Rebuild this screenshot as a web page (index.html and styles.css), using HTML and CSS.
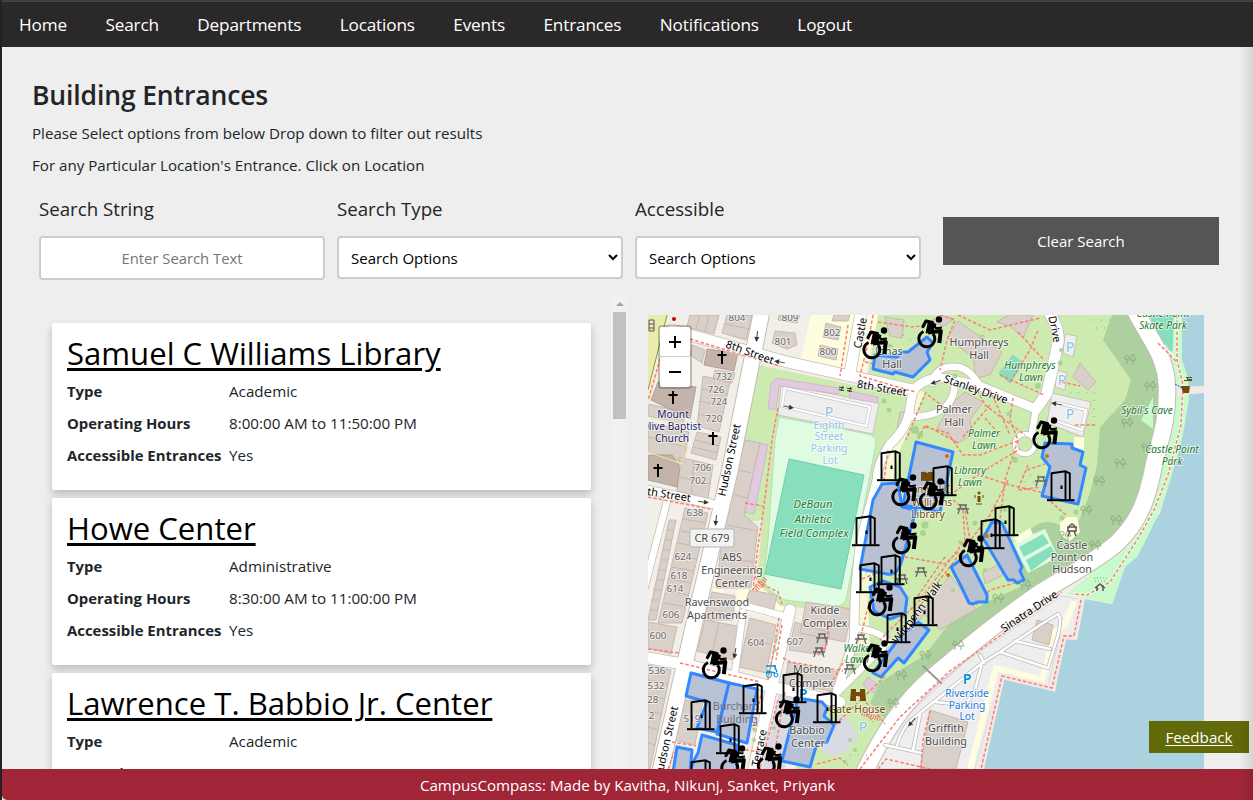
FILE: index.html
```html
<!DOCTYPE html>
<html lang="en">
<head>
<meta charset="utf-8">
<title>Building Entrances</title>
<link rel="stylesheet" href="styles.css">
</head>
<body>
<div class="window">
<nav class="nav"><a>Home</a><a>Search</a><a>Departments</a><a>Locations</a><a>Events</a><a>Entrances</a><a>Notifications</a><a>Logout</a></nav>
<main class="page">
<h1 class="title">Building Entrances</h1>
<p class="intro">Please Select options from below Drop down to filter out results</p>
<p class="intro second">For any Particular Location's Entrance. Click on Location</p>
<form class="filters">
<label class="field"><span>Search String</span><input type="text" placeholder="Enter Search Text"></label>
<label class="field"><span>Search Type</span><select><option>Search Options</option></select></label>
<label class="field"><span>Accessible</span><select><option>Search Options</option></select></label>
<button type="button" class="clear">Clear Search</button>
</form>
<div class="content">
<section class="list">
<article class="card"><h2><a>Samuel C Williams Library</a></h2><dl><dt>Type</dt><dd>Academic</dd><dt>Operating Hours</dt><dd>8:00:00 AM to 11:50:00 PM</dd><dt>Accessible Entrances</dt><dd>Yes</dd></dl></article>
<article class="card"><h2><a>Howe Center</a></h2><dl><dt>Type</dt><dd>Administrative</dd><dt>Operating Hours</dt><dd>8:30:00 AM to 11:00:00 PM</dd><dt>Accessible Entrances</dt><dd>Yes</dd></dl></article>
<article class="card"><h2><a>Lawrence T. Babbio Jr. Center</a></h2><dl><dt>Type</dt><dd>Academic</dd><dt>Operating Hours</dt><dd></dd></dl></article>
</section>
<div class="scroll"><i class="up"></i><i class="thumb"></i></div>
<section class="map">
<svg class="tiles" viewBox="648 315 556 454" width="556" height="454">
<defs>
<g id="door" fill="none" stroke="#000" stroke-linejoin="round"><path d="M0 30.200H27.500" stroke-width="2"/><path d="M4.500 29.500V3.200L18.500 1.200V29.500M18.500 1.300L22.800 3.300V29.500" stroke-width="1.900"/><path d="M14.500 15.500v3.500" stroke-width="2"/></g>
<g id="chair" fill="none" stroke="#000" stroke-linejoin="round"><circle cx="21" cy="3.500" r="3.200" fill="#000" stroke="none"/><path d="M5 10.500L8 5L14.500 6.500" stroke-width="3.200" stroke-linecap="round"/><path d="M10.500 5.500L18 8.500L14 16L8 17Z" fill="#000" stroke-width="1"/><path d="M10 16.500L22.800 15L21.300 27" stroke-width="4"/><path d="M16 9L18 12.300L24 11.500" stroke-width="2.200"/><path d="M5.500 15.500A8 8 0 1 0 16.800 23Q16.800 20 15 18" stroke-width="3"/></g>
<g id="cross"><path d="M0-6V7M-4.500-2H4.500" stroke="#000" stroke-width="2" fill="none"/></g>
<g id="trees" fill="none" stroke="#86aa7a" stroke-width=".9"><path d="M-3 5V0M-3-4Q-6-3-5 0H-1Q0-3-3-4M3 5V1M3-5L0 1H6Z"/></g>
<g id="picnic" fill="none" stroke="#666" stroke-width="1.300"><path d="M-4-4H4M-6 0H6M-2-4L-5 5M2-4L5 5"/></g>
<g id="arrow"><path d="M-5 0H3" stroke="#444" fill="none"/><path d="M6 0L1-2.500V2.500Z" fill="#333"/></g>
</defs>
<rect x="648" y="315" width="556" height="454" fill="#f2efe9"/>
<!-- land cover -->
<path fill="#fffde0" d="M811 315H880L862 376L800 363ZM743 440L720 545L712 600L722 600L760 440ZM738 580L790 592L785 620L735 610Z"/>
<path fill="#cdebb0" d="M759 365L873 389L866 384L878 315H1140L1167 380L1150 480L1110 550L950 665L860 769H795L850 640L850 612L780 606L757 580L762 520L741 523L744 440Z"/>
<path fill="#fffde0" d="M876 315H863L853 378L915 395L904 430L880 452L855 580L851 650L870 650L868 600L900 450L925 392L865 380Z" opacity=".75"/>
<path fill="#add19e" d="M1112 315H1140L1170 360V430L1148 500L1110 555L1040 600L947 672L890 725L870 703L880 682L925 655L948 625L985 603L1024 585L1006 550L1030 530Q1040 519 1055 523L1075 530L1090 493L1097 465L1100 427L1125 400L1131 380L1103 340Z"/>
<path fill="#aad3df" d="M1182 315H1204V769H983L1004 680L1012 674L1055 692L1065 638L1077 640L1085 599L1112 604L1125 567L1160 513L1173 470L1189 400L1182 360Z"/>
<path fill="#c8facc" d="M1140 315H1182V360Q1190 380 1189 395Q1184 440 1173 470Q1163 510 1137 557L1125 567L1112 604L1067 594L1130 540L1158 480L1174 390Z"/>
<path fill="#eee" stroke="#d8d8d8" d="M863 769L900 722L965 662L1062 596L1083 600L1074 636L1060 636L1048 686L1008 674L998 685L975 769Z"/>
<path fill="none" stroke="#fffde0" stroke-width="6" d="M1074 601L1065 625L1055 632L1042 680L996 668L970 769"/>
<path fill="none" stroke="#f2e9e6" stroke-width="6" d="M1081 598L1074 637L1064 636L1052 688L1002 676L981 769"/>
<path fill="#f2e9e0" d="M1172 387L1204 386V393L1172 396Z"/>
<path fill="#88dfc0" stroke="#70c9a7" stroke-width=".6" d="M1150 315H1173L1172 351L1165 350ZM1013 355L1023 363L1010 383L999 373Z"/>
<path fill="#dffce2" stroke="#aadbb4" stroke-width=".8" d="M779 417L868 434Q876 436 876 443L846 600Q843 606 836 606L785 600Q764 590 764 578L768 540L775 440Z"/>
<path fill="#88dfbe" stroke="#75ccab" d="M789 459L864 475L841 589L765 574Z"/>
<path fill="#eee" stroke="#bfb6b6" stroke-width=".8" d="M781 384L879 403L873 434L778 415ZM1065 334L1077 336L1073 357L1063 353ZM1057 370L1067 373L1065 390L1055 387ZM1052 393L1091 402L1083 437L1047 423Z"/>
<path fill="none" stroke="#c5c5c5" stroke-width="3.500" d="M785 386L782 406L866 426L870 407L785 388M1058 403L1086 410L1082 430L1056 421"/>
<path fill="none" stroke="#fff" stroke-width="2.300" d="M785 386L782 406L866 426L870 407L785 388M1058 403L1086 410L1082 430L1056 421"/>
<path fill="#e0cadd" stroke="#c9aec5" stroke-width=".7" d="M776 378L839 388V394L779 386L776 409H768L771 384ZM850 391L878 397L877 403L849 398ZM759 443L768 445L754 514L743 512ZM868 677L878 685L873 693L863 685Z"/>
<path fill="#dffce2" d="M1013 543L1045 529L1058 557L1028 573Z"/><path fill="#88dfbe" d="M1019 547L1043 534L1049 543L1024 557ZM1026 560L1051 546L1055 553L1031 571Z"/><path fill="#fffde0" d="M1013 538L1030 528L1033 534L1018 543ZM1060 523L1067 517H1077L1080 532L1070 541L1060 535ZM1074 437H1084V451H1074Z"/><path fill="#c8facc" d="M1153 397V429L1141 420Z"/>
<path fill="#dadae5" d="M780 690L800 696L785 769H762ZM845 715L858 735Q850 752 832 757L820 749L835 718Z"/>
<!-- buildings -->
<g fill="#d9d0c9" stroke="#c1b0a6" stroke-width=".8">
<path d="M690 315H719L714 334L687 327ZM700 315L696 329M709 315L705 332M727 315H752L746 340L722 333ZM725 324L750 329M692 345L705 350L702 363L690 355ZM715 370L735 373L732 383L713 379ZM703 376L730 382L719 432L697 426ZM701 389L727 394M699 401L724 406M698 414L722 419M697 432L721 437L716 460L691 453ZM695 440L719 446M693 447L718 453"/>
<path d="M648 404L686 412L683 424L648 416ZM648 422L689 432L684 462L648 452ZM648 437L687 447M679 457L713 465L708 499L677 491ZM677 476L710 484M694 461L691 495"/>
<path d="M685 508L708 513L682 623H658ZM683 519L706 523M681 531L703 535M678 543L700 547M675 555L697 559M672 567L694 571M669 579L691 583M667 591L689 595M664 603L686 607M669 520H676L656 620H648ZM667 530H674M665 540H672M662 550H670M660 560H668M658 570H666M656 580H664M653 590H661M651 600H659M650 610H657"/>
<path d="M745 440L760 443L744 515L758 527L751 588L716 588L723 530ZM739 470L751 473M734 495L747 498M727 525L758 531M720 558L754 562M750 590L777 595L773 613L743 606ZM712 592L735 596L733 620L704 620ZM705 620L742 627L733 660L697 651ZM719 622L712 655M750 618L776 625L766 673L739 667ZM747 638L772 645M648 622L677 627L671 654L648 648ZM648 665L671 670L650 769H648ZM648 680L668 684M648 695L665 699M648 711L662 714M648 727L658 730M648 743L655 745"/>
<path d="M806 602L852 609L845 642L800 633ZM795 622L830 633L823 655L789 650ZM788 662L842 673L836 692L785 683ZM685 700L703 700L695 745L674 740ZM775 331L795 333L797 345L787 349L772 343ZM779 315H800L797 323L778 320ZM826 323L841 327L838 340L823 337ZM820 345L838 349L836 360L818 356ZM834 315H850L848 321H832Z"/>
<path d="M885 317L904 320L902 338L890 336ZM958 321L1002 352L990 375L976 378L973 357L947 338ZM997 322L1008 315H1033L1023 338L1010 326ZM965 392L983 402L970 420L972 435L958 443L937 428L950 405ZM1080 363L1096 382L1088 390L1073 377ZM950 575L976 609L940 630L922 612ZM983 572L1000 564L1003 575L985 584ZM930 710L968 722L956 769H920ZM1037 620L1053 625L1049 645L1032 640ZM900 412H906V429H897ZM919 604L926 610L920 620L914 615ZM940 315L954 319L944 326L930 322Z"/>
</g>
<path fill="#c4b3aa" stroke="#aa978b" stroke-width=".8" d="M707 349L738 353L734 371L704 365ZM658 382L696 387L690 419L651 400ZM648 455H672L680 467L677 487L648 480Z"/>
<path fill="none" stroke="#eeea9e" d="M649 418L690 424M650 433L688 447L682 464L648 452M668 330L648 405"/>
<path fill="#e6eba0" d="M648 315H668L656 360L648 392Z" opacity=".8"/><path fill="none" stroke="#8c9c3a" d="M667 315L648 390"/>
<!-- roads: casing then fill -->
<g fill="none" stroke-linecap="round" stroke-linejoin="round">
<g stroke="#c5bbb7">
<path stroke-width="18.500" d="M1135 310C1150 340 1166 355 1167 387C1168 420 1160 440 1154 465C1147 500 1140 520 1117 543C1095 562 1060 580 1040 593C1000 620 970 645 947 665C915 690 890 718 863 775"/>
<path stroke-width="17.500" d="M762 310L730 470L695 620L660 772"/>
<path stroke-width="12.500" d="M672 330L783 361L913 390M861 312L850 373M1049 312Q1060 330 1058 343L1047 393L1036 409M648 658L688 665L777 688L840 702M790 610L773 682L753 772"/>
<path stroke-width="10" d="M648 490L712 504M913 390Q930 372 958 381L980 386L1036 409M913 390L910 407Q908 428 890 444Q877 465 877 480L860 543L855 593L854 640L837 692"/>
<path stroke-width="8" d="M933 383Q935 365 958 367Q970 369 980 386M955 383Q954 417 910 417M1036 409L1032 432M668 497L644 590M743 612L735 672M743 605L783 616M854 628Q880 630 888 642L830 700"/>
<circle cx="1025" cy="444" r="10" stroke-width="6"/></g>
<g stroke="#fff">
<path stroke-width="16.500" d="M1135 310C1150 340 1166 355 1167 387C1168 420 1160 440 1154 465C1147 500 1140 520 1117 543C1095 562 1060 580 1040 593C1000 620 970 645 947 665C915 690 890 718 863 775"/>
<path stroke-width="15.500" d="M762 310L730 470L695 620L660 772"/>
<path stroke-width="11" d="M672 330L783 361L913 390M861 312L850 373M1049 312Q1060 330 1058 343L1047 393L1036 409M648 658L688 665L777 688L840 702M790 610L773 682L753 772"/>
<path stroke-width="8.500" d="M648 490L712 504M913 390Q930 372 958 381L980 386L1036 409M913 390L910 407Q908 428 890 444Q877 465 877 480L860 543L855 593L854 640L837 692"/>
<path stroke-width="6.500" d="M933 383Q935 365 958 367Q970 369 980 386M955 383Q954 417 910 417M1036 409L1032 432M668 497L644 590M743 612L735 672M743 605L783 616M854 628Q880 630 888 642L830 700"/>
<circle cx="1025" cy="444" r="10" stroke-width="4.500"/></g>
<path stroke="#bbb" stroke-width="4" d="M885 745L921 753M897 745Q903 725 915 717L982 663L1000 652L1040 625L1058 614Q1062 618 1058 635L1048 668L1000 652M982 663L975 690L965 705L935 702M980 655L984 663M920 715L913 750M1015 641L1050 649"/>
<path stroke="#fff" stroke-width="2.500" d="M885 745L921 753M897 745Q903 725 915 717L982 663L1000 652L1040 625L1058 614Q1062 618 1058 635L1048 668L1000 652M982 663L975 690L965 705L935 702M980 655L984 663M920 715L913 750M1015 641L1050 649"/>
<path stroke="#999" stroke-width="2" d="M923 666L941 683"/>
</g>
<!-- footpaths -->
<g fill="none" stroke="#fff" stroke-opacity=".6" stroke-width="2.800"><path d="M1177 315L1177 360L1183 385L1181 425L1168 475L1154 510L1137 540L1110 582L1087 595L1073 594M1164 345L1177 362"/></g>
<g fill="none" stroke="#f98072" stroke-width="1.500" stroke-dasharray="3.500 2">
<path d="M1158 343L1177 362M1177 315V360L1183 385L1181 425L1168 475L1154 510L1137 540L1110 582L1087 595L1073 594M1081 600L1074 636L1064 636L1052 688L1002 676L981 769"/>
<path d="M690 339L780 366M668 332L654 380L648 400M778 408L772 440L766 490L762 520L758 545L753 590L758 582L778 592L782 604M745 503L763 506M648 497L710 509M648 649L680 653M755 576L765 590"/>
<path d="M873 315L868 343L860 376L915 392M878 322L912 327L938 324M865 362L878 365M848 325L840 376M940 315L955 320L947 340L940 370M958 315L990 330L1040 318M1018 332L1044 360M1000 375L1044 395M1010 382L1030 350L1038 330M1013 398L1010 420L1018 440L1005 480L1000 520M990 390L1010 435M958 443L925 425L918 440M925 427L948 433L963 455L980 455L1020 440M950 495L985 470L1020 449M985 477L1010 485L1040 492L1066 515M963 510L965 540L920 600L880 640M953 500L965 510L970 540M1008 480L990 515L955 560L915 612M975 385L985 405L1025 435M990 405L963 437M985 418L1000 435M905 557L945 564L960 550M945 557L915 600M1028 465L1018 490L1040 487M1027 470L1045 464M888 450L880 510L866 575M872 590L860 640M862 579L895 565M928 395L945 408M926 392L906 440M1062 382L1080 386M1075 425H1096M1012 543L1005 528M976 605L990 590L1018 582"/>
<path d="M779 618L772 660L768 680M782 625L776 660M783 658L790 662L843 671M785 692L772 769M778 700L760 769M680 663L760 682M860 769L900 717L950 671L1062 592M885 676L835 725M672 742L696 746M668 769L674 752M740 749L760 752M762 690L753 730M863 708L873 722M858 695L875 711L885 724M817 764L840 758L848 765M878 769L886 759L930 769M930 711L923 740L921 769M830 620L825 650M818 655L828 643M833 680L845 660"/>
</g>
<path fill="none" stroke="#ef6f62" stroke-width="5" stroke-dasharray="1 1.300" d="M862 713L880 719M756 590L766 578"/>
<g fill="#a3d18b" opacity=".85"><circle cx="890" cy="346" r="2"/><circle cx="884" cy="401" r="2.500"/><circle cx="889" cy="410" r="2.500"/><circle cx="888" cy="393" r="2"/><circle cx="915" cy="430" r="4"/><circle cx="920" cy="435" r="3"/><circle cx="982" cy="337" r="2.500"/><circle cx="955" cy="376" r="2.500"/><circle cx="1009" cy="414" r="2.500"/><circle cx="1038" cy="386" r="3"/><circle cx="1060" cy="363" r="2.500"/><circle cx="1061" cy="350" r="2"/><circle cx="925" cy="525" r="3.500"/><circle cx="923" cy="533" r="3"/><circle cx="960" cy="542" r="2"/><circle cx="1015" cy="460" r="3"/><circle cx="1076" cy="512" r="2.500"/><circle cx="1062" cy="518" r="2.500"/><circle cx="985" cy="570" r="2"/><circle cx="953" cy="590" r="2"/><circle cx="776" cy="640" r="2"/><circle cx="775" cy="650" r="2"/><circle cx="754" cy="740" r="2"/><circle cx="755" cy="730" r="2"/><circle cx="774" cy="728" r="2"/><circle cx="850" cy="740" r="2"/><circle cx="845" cy="762" r="2"/><circle cx="855" cy="750" r="2"/><circle cx="1005" cy="510" r="2"/><circle cx="975" cy="523" r="2.500"/></g>
<path stroke="#6fb258" stroke-dasharray="1 7" fill="none" d="M1093 320H1112M1096 328H1106M1070 393H1095M1094 400V430M1022 475H1040M1025 482H1040M885 342L895 348M903 335L915 342M850 755H870"/>
<!-- selected buildings -->
<g fill="#b6bed2" fill-opacity=".96" stroke="#3388ff" stroke-width="3" stroke-linejoin="round">
<path d="M875 355L897 357L902 352H908L927 337L933 343L927 352L930 360L913 377L895 372L893 374L873 369Z"/><path d="M916 442L953 452L940 512L903 505Z"/><path d="M882 484L898 483L902 507L916 510L902 560Q898 576 887 574L860 569L873 500Z"/><path d="M870 587L883 581L900 587L907 598L905 613L890 619L874 611Z"/><path d="M951 567L967 555L987 595V602H977L973 604L969 603L962 588Z"/><path d="M983 538L992 522L1002 523L1022 567L1020 571L1024 580L1017 583L1014 580L1008 580Z"/><path d="M1045 443L1072 444V448L1083 452L1080 465L1086 468L1078 504L1042 496L1050 467L1042 457Z"/><path d="M918 622L929 630L904 663L898 658L881 677L873 673L900 637Z"/><path d="M691 673L729 683L717 732L697 728L707 702L686 696Z"/><path d="M729 683L757 689L747 743L717 734Z"/><path d="M702 735L737 745V772H690L693 762L698 753Z"/><path d="M677 747L692 750L690 772H673Z"/><path d="M798 698L822 702L827 708L824 716L834 725L827 742L817 743L810 767L782 761Z"/></g>
<g fill="#c77400"><circle cx="947" cy="456" r="2"/><circle cx="1047" cy="456" r="2"/><circle cx="987" cy="536" r="2"/><circle cx="948" cy="575" r="2"/><circle cx="725" cy="660" r="2"/></g>
<!-- small symbols -->
<g><use href="#trees" x="1130" y="359"/><use href="#trees" x="1150" y="386"/><use href="#trees" x="1127" y="423"/><use href="#trees" x="1147" y="447"/><use href="#trees" x="1120" y="463"/><use href="#trees" x="1099" y="481"/><use href="#trees" x="1086" y="510"/><use href="#trees" x="1116" y="520"/><use href="#trees" x="1095" y="545"/><use href="#trees" x="1065" y="535"/><use href="#trees" x="1025" y="585"/><use href="#trees" x="998" y="598"/><use href="#trees" x="958" y="645"/><use href="#trees" x="925" y="655"/><use href="#trees" x="901" y="675"/><use href="#trees" x="893" y="703"/></g>
<use href="#picnic" x="963" y="509"/><use href="#picnic" x="921" y="572"/><use href="#picnic" x="902" y="579"/><use href="#picnic" x="822" y="638"/><use href="#picnic" x="819" y="652"/><use href="#picnic" x="861" y="639"/><use href="#picnic" x="850" y="669"/><use href="#picnic" x="1041" y="481"/>
<use href="#cross" x="722" y="357"/><use href="#cross" x="673" y="397"/><use href="#cross" x="713" y="438"/><use href="#cross" x="658" y="470"/>
<use href="#arrow" transform="translate(757 336) rotate(97)"/><use href="#arrow" transform="translate(780 362) rotate(190)"/><use href="#arrow" transform="translate(788 407) rotate(10)"/><use href="#arrow" transform="translate(703 502) rotate(8)"/><use href="#arrow" transform="translate(716 520) rotate(96)"/><use href="#arrow" transform="translate(936 382) rotate(160)"/><use href="#arrow" transform="translate(735 653) rotate(100)"/><use href="#arrow" transform="translate(912 722) rotate(130)"/><use href="#arrow" transform="translate(1057 404) rotate(190)"/>
<path fill="none" stroke="#555" d="M649 320h5v11h-5zM649 324h5M649 328h5"/><path fill="none" stroke="#222" stroke-width=".9" d="M839 387l5 1M839 389.500l5 1M841 391l2-5M847 388l5 1M847 390.500l5 1M849 392l2-5"/>
<circle cx="674" cy="319" r="2" fill="#c00"/>
<path fill="#734a08" d="M1181 386h9l-1 7h-6zM1184 381h8v-2h-4v-1h4v-1h-6v1h1v2h-3zM851 689h5v3h4v-3h5l1 12h-6v-5h-4v5h-6zM921 472q4-1 6 1q3-2 6-1v9q-4-1-6 1q-2-2-6-1zM977.500 496h3v6h-3z"/><circle cx="979" cy="493" r="1.500" fill="#734a08"/><path stroke="#734a08" fill="none" d="M975 498v-3M983 498v-3M976 504h6"/>
<path fill="none" stroke="#33f" stroke-dasharray="2 1" d="M1175 384L1182 388"/>
<path fill="none" stroke="#555" stroke-width="1.500" d="M1067 527h10M1068 527v4h8v-4M1068 536l2-5h4l2 5M1069 526l3-2l3 2M1095 588l5-4l5 4M1097 587v4M1103 587v4"/><path stroke="#7a9f7c" stroke-dasharray="1 2" d="M1094 578H1107M1095 581H1106"/>
<path fill="none" stroke="#0092da" stroke-width="1.500" d="M766 666h10M774 665l3 7M767 671l8 2M766 673l4-2"/><circle cx="769" cy="675" r="2.500" fill="none" stroke="#0092da"/><circle cx="776" cy="675" r="2" fill="none" stroke="#0092da"/>
<!-- labels -->
<g class="num"><text x="737" y="321">804</text><text x="790" y="321">809</text><text x="783" y="345">801</text><text x="832" y="336">802</text><text x="828" y="355">800</text><text x="724" y="380">732</text><text x="716" y="393">726</text><text x="719" y="405">724</text><text x="714" y="422">720</text><text x="703" y="471">706</text><text x="698" y="484">702</text><text x="695" y="516">638</text><text x="683" y="560">624</text><text x="679" y="579">618</text><text x="675" y="592">614</text><text x="671" y="618">606</text><text x="658" y="639">600</text><text x="756" y="646">604</text><text x="795" y="645">607</text><text x="657" y="674">536</text><text x="656" y="689">532</text><text x="650" y="703">528</text><text x="646" y="719">522</text><text x="692" y="722">519</text></g>
<g class="lbl navy"><text x="673" y="418">Mount</text><text x="671" y="430">Olive Baptist</text><text x="672" y="442">Church</text></g>
<g class="lbl"><text x="732" y="561">ABS</text><text x="732" y="574">Engineering</text><text x="732" y="587">Center</text><text x="717" y="606">Ravenswood</text><text x="717" y="619">Apartments</text><text x="979" y="346">Humphreys</text><text x="979" y="359">Hall</text><text x="889" y="355">Jonas</text><text x="892" y="368">Hall</text><text x="954" y="413">Palmer</text><text x="954" y="426">Hall</text><text x="1072" y="549">Castle</text><text x="1072" y="561">Point on</text><text x="1072" y="573">Hudson</text><text x="825" y="614">Kidde</text><text x="825" y="627">Complex</text><text x="812" y="673">Morton</text><text x="811" y="687">Complex</text><text x="807" y="734">Babbio</text><text x="808" y="747">Center</text><text x="946" y="732">Griffith</text><text x="946" y="745">Building</text></g>
<g class="lbl dim"><text x="736" y="710">Burchard</text><text x="737" y="723">Building</text></g>
<g class="lbl brown"><text x="928" y="493">Samuel C</text><text x="932" y="506">Williams</text><text x="928" y="518">Library</text><text x="857" y="713">Gate House</text></g>
<g class="lbl green"><text x="813" y="508">DeBaun</text><text x="813" y="523">Athletic</text><text x="814" y="537">Field Complex</text></g>
<g class="lbl green small"><text x="1030" y="369">Humphreys</text><text x="1031" y="381">Lawn</text><text x="984" y="437">Palmer</text><text x="984" y="449">Lawn</text><text x="970" y="474">Library</text><text x="970" y="486">Lawn</text><text x="1163" y="317">Castle Point</text><text x="1163" y="329">Skate Park</text><text x="1147" y="414">Sybil's Cave</text><text x="1172" y="453">Castle Point</text><text x="1172" y="465">Park</text><text x="859" y="652">Walker</text><text x="857" y="663">Lawn</text></g>
<g class="lbl pale"><text x="829" y="429">Eighth</text><text x="829" y="440">Street</text><text x="829" y="452">Parking</text><text x="830" y="464">Lot</text></g>
<g class="lbl blue"><text x="967" y="697">Riverside</text><text x="967" y="709">Parking</text><text x="967" y="720">Lot</text></g>
<g class="park"><text class="pp" x="829" y="417">P</text><text class="pp" x="1070" y="352">P</text><text class="pp" x="1062" y="385">P</text><text class="pp" x="1070" y="419">P</text><text x="967" y="684">P</text><text x="803" y="699">P</text><text class="pp" x="863" y="732">P</text></g>
<g class="street"><text transform="translate(750 352) rotate(20)" y="4">8th Street</text><text transform="translate(882 388) rotate(10)" y="4">8th Street</text><text transform="translate(976 389) rotate(19)" y="4">Stanley Drive</text><text transform="translate(666 494) rotate(9)" y="4">7th Street</text><text transform="translate(729 460) rotate(-78)" y="4">Hudson Street</text><text transform="translate(666 742) rotate(-77)" y="4">Hudson Street</text><text transform="translate(860 333) rotate(-79)" y="4">Castle</text><text transform="translate(1055 329) rotate(78)" y="4">Drive</text><text transform="translate(759 748) rotate(-78)" y="4">Terrace</text><text transform="translate(1029 611) rotate(-34)" y="4">Sinatra Drive</text><text transform="translate(917 612) rotate(-53)" y="4">Wittpenn Walk</text></g>
<rect x="690" y="529" width="44" height="18" rx="2" fill="#f2f2f0" stroke="#b5b5b5"/><text class="ref" x="712" y="542">CR 679</text>
<!-- entrance markers -->
<use href="#chair" x="863" y="327"/><use href="#chair" x="918" y="316"/>
<use href="#door" x="877" y="450"/><use href="#door" x="929" y="465"/><use href="#chair" x="892" y="474"/><use href="#chair" x="919.500" y="478"/>
<use href="#door" x="1047" y="470"/><use href="#chair" x="1033" y="417"/>
<use href="#door" x="991" y="505"/><use href="#door" x="852" y="515"/><use href="#door" x="977" y="518"/><use href="#chair" x="892.500" y="522"/><use href="#chair" x="959.500" y="535"/>
<use href="#door" x="877" y="554"/><use href="#door" x="856" y="562"/><use href="#chair" x="868.500" y="584"/><use href="#door" x="910" y="595"/><use href="#door" x="883" y="612"/><use href="#chair" x="863.500" y="640"/><use href="#chair" x="702.500" y="647"/>
<use href="#door" x="779" y="672"/><use href="#door" x="739" y="683"/><use href="#door" x="813" y="692"/><use href="#chair" x="775.500" y="696"/><use href="#door" x="687" y="699"/><use href="#door" x="716" y="723"/><use href="#chair" x="721" y="745"/><use href="#chair" x="757.500" y="743"/><use href="#door" x="687" y="759"/>
</svg>
<div class="zoom"><b class="plus"></b><b></b></div>
</section>
</div>
</main>
<footer class="footer">CampusCompass: Made by Kavitha, Nikunj, Sanket, Priyank</footer>
<a class="feedback">Feedback</a>
<div class="edge"></div>
</div>
</body>
</html>
```
FILE: styles.css
```css
* { box-sizing: border-box; }
body { margin: 0; background: #1e1e20; font-family: "Open Sans", "Noto Sans", sans-serif; color: #212529; overflow: hidden; }
.window { position: relative; height: 800px; display: flex; flex-direction: column; border-left: 2px solid #222225; border-top: 1px solid #3d3d3d; background: #eee; overflow: hidden; }
.nav { display: flex; align-items: center; gap: 38.5px; height: 46px; flex: none; padding: 0 0 0 17px; background: #2b2829; border-top: 1px solid #454545; color: #fff; font-size: 17.2px; letter-spacing: -.17px; }
.page { flex: 1; min-height: 0; padding: 32px 0 0 30px; display: flex; flex-direction: column; }
.title { margin: 0; height: 33px; line-height: 33px; font-size: 26.5px; font-weight: 600; letter-spacing: -.13px; }
.intro { margin: 9px 0 0; height: 24px; line-height: 24px; font-size: 15.15px; }
.intro.second { margin-top: 8px; }
.filters { display: flex; height: 102px; margin: 17px 0 0 7px; gap: 12px; }
.field { width: 286px; display: flex; flex-direction: column; }
.field span { height: 30px; line-height: 30px; font-size: 18.7px; margin-bottom: 12px; }
.field input, .field select { width: 286px; height: 43px; border: 2px solid #ccc; border-radius: 4px; background: #fff; font: 15px "Open Sans", sans-serif; color: #000; }
.field select { padding: 0 8px; }
.field input { text-align: center; height: 44px; font-size: 14.8px; }
.field input::placeholder { color: #757575; }
.clear { width: 276px; height: 48px; margin: 23px 0 0 10px; border: 0; background: #555; color: #fff; font: 15px "Open Sans", sans-serif; }
.content { display: flex; flex: 1; min-height: 0; }
.list { width: 579px; padding: 27px 0 0 20px; display: flex; flex-direction: column; gap: 8px; overflow: hidden; }
.card { width: 539px; height: 167px; flex: none; padding: 9px 15px; background: #fff; border-radius: 2px; box-shadow: 0 4px 8px rgba(0,0,0,.22); }
.card h2 { margin: 0; height: 43px; line-height: 42px; font-size: 31.1px; font-weight: 400; color: #000; text-decoration: underline; text-decoration-thickness: 3px; text-underline-offset: 3px; white-space: nowrap; }
.card dl { margin: 0; display: grid; grid-template-columns: 162px 1fr; grid-auto-rows: 32px; line-height: 32px; font-size: 15.2px; }
.card dt { font-weight: 700; font-size: 14.9px; white-space: nowrap; }
.card dd { margin: 0; }
.scroll { width: 17px; background: #f1f1f1; padding: 6px 2px 0; display: flex; flex-direction: column; align-items: center; }
.up { border: 4px solid transparent; border-top: 0; border-bottom: 4px solid #a3a3a3; margin-bottom: 6px; }
.thumb { width: 13px; height: 107px; background: #c1c1c1; }
.map { position: relative; margin: 19px 0 0 20px; width: 556px; height: 454px; flex: none; }
.tiles { display: block; }
.zoom { position: absolute; left: 10px; top: 10px; width: 34px; border: 2px solid rgba(0,0,0,.22); border-radius: 4px; background-clip: padding-box; }
.zoom b { display: block; height: 30px; background: linear-gradient(#000,#000) 50% 50% / 12px 2px no-repeat #fff; border-radius: 2px; }
.zoom .plus { border-bottom: 1px solid #ccc; background: linear-gradient(#000,#000) 50% 50% / 12px 2px no-repeat, linear-gradient(#000,#000) 50% 50% / 2px 12px no-repeat #fff; }
.footer { height: 31px; flex: none; line-height: 32px; background: #a02637; color: #fff; text-align: center; font-size: 15.1px; border-bottom-left-radius: 5px; z-index: 1; }
.feedback { position: absolute; left: 1147px; top: 720px; width: 100px; height: 32px; line-height: 32px; text-align: center; background: #616909; color: #fff; text-decoration: underline; text-underline-offset: 2px; font-size: 15.2px; z-index: 2; }
.edge { position: absolute; right: 0; top: 46px; bottom: 0; width: 14px; background: linear-gradient(90deg, transparent, rgba(0,0,0,.1)); z-index: 3; }
.tiles text { font-family: "Noto Sans", sans-serif; text-anchor: middle; paint-order: stroke; stroke: rgba(255,255,255,.6); stroke-width: 2px; stroke-linejoin: round; }
.num text { font-size: 9.8px; fill: #666; }
.lbl text { font-size: 10.8px; fill: #4d4d4d; }
.lbl.dim text { fill: #6f7280; stroke: none; }
.navy text { font-size: 10.2px; fill: #1a1a66; }
.brown text { font-size: 10.3px; fill: #734a08; }
.green text { fill: #267a32; font-style: italic; font-size: 11.2px; }
.green.small text { font-size: 10.2px; }
.pale text { fill: #92c6e8; font-size: 10.2px; }
.blue text { fill: #1a7ee0; font-size: 10.2px; }
.park text { font-size: 14px; font-weight: 600; fill: #0092da; }
.park .pp { fill: #88c4e8; font-weight: 400; }
.street text { font-size: 10.9px; fill: #000; }
.tiles .ref { font-size: 10.9px; fill: #444; }
```
